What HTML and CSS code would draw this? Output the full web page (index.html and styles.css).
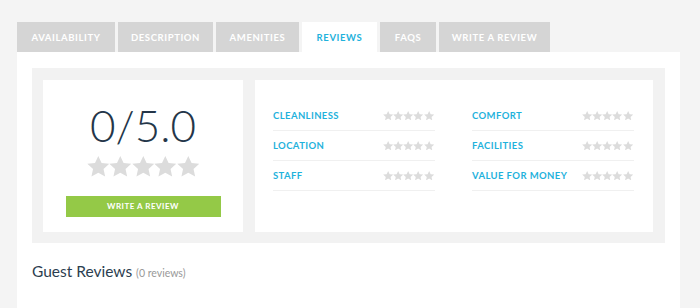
FILE: index.html
```html
<!DOCTYPE html>
<html lang="en">
<head>
    <meta charset="UTF-8">
    <meta name="viewport" content="width=device-width, initial-scale=1.0">
    <title>Reviews</title>
    <link rel="stylesheet" href="styles.css">
</head>
<body>
    <svg width="0" height="0" class="defs">
        <symbol id="star" viewBox="2 2 20 19.2">
            <path d="M12 2l2.94 6.26 6.86.74-5.12 4.65 1.44 6.75L12 16.9l-6.12 3.5 1.44-6.75L2.2 9l6.86-.74z"/>
        </symbol>
    </svg>
    <div class="wrap">
        <ul class="tabs">
            <li class="t-avail">Availability</li>
            <li class="t-desc">Description</li>
            <li class="t-amen">Amenities</li>
            <li class="t-rev active">Reviews</li>
            <li class="t-faq">FAQs</li>
            <li class="t-write">Write a Review</li>
        </ul>
        <div class="panel">
            <div class="summary">
                <div class="score-card">
                    <div class="score">0/5.0</div>
                    <div class="stars big">
                        <svg><use href="#star"/></svg><svg><use href="#star"/></svg><svg><use href="#star"/></svg><svg><use href="#star"/></svg><svg><use href="#star"/></svg>
                    </div>
                    <button class="btn">Write a Review</button>
                </div>
                <div class="ratings-card">
                    <div class="col">
                        <div class="row"><span>Cleanliness</span><div class="stars small"><svg><use href="#star"/></svg><svg><use href="#star"/></svg><svg><use href="#star"/></svg><svg><use href="#star"/></svg><svg><use href="#star"/></svg></div></div>
                        <div class="row"><span>Location</span><div class="stars small"><svg><use href="#star"/></svg><svg><use href="#star"/></svg><svg><use href="#star"/></svg><svg><use href="#star"/></svg><svg><use href="#star"/></svg></div></div>
                        <div class="row"><span>Staff</span><div class="stars small"><svg><use href="#star"/></svg><svg><use href="#star"/></svg><svg><use href="#star"/></svg><svg><use href="#star"/></svg><svg><use href="#star"/></svg></div></div>
                    </div>
                    <div class="col">
                        <div class="row"><span>Comfort</span><div class="stars small"><svg><use href="#star"/></svg><svg><use href="#star"/></svg><svg><use href="#star"/></svg><svg><use href="#star"/></svg><svg><use href="#star"/></svg></div></div>
                        <div class="row"><span>Facilities</span><div class="stars small"><svg><use href="#star"/></svg><svg><use href="#star"/></svg><svg><use href="#star"/></svg><svg><use href="#star"/></svg><svg><use href="#star"/></svg></div></div>
                        <div class="row"><span>Value for Money</span><div class="stars small"><svg><use href="#star"/></svg><svg><use href="#star"/></svg><svg><use href="#star"/></svg><svg><use href="#star"/></svg><svg><use href="#star"/></svg></div></div>
                    </div>
                </div>
            </div>
            <h2 class="guest">Guest Reviews <small>(0 reviews)</small></h2>
        </div>
    </div>
</body>
</html>
```

FILE: styles.css
```css
/* Reviews tab */
body {
    margin: 0;
    background-color: #f4f4f4;
    font-family: Lato, "Open Sans", sans-serif;
    color: #2c3e50;
}

.defs {
    position: absolute;
}

.wrap {
    margin-left: 17px;
    width: 663px;
    padding-top: 22px;
}

.tabs {
    display: flex;
    gap: 3px;
    list-style: none;
    margin: 0;
    padding: 0;
}

.tabs li {
    height: 30px;
    line-height: 31px;
    text-align: center;
    background-color: #d5d5d5;
    color: #fff;
    font-size: 9.5px;
    font-weight: 700;
    letter-spacing: 0.6px;
    text-transform: uppercase;
}

.t-avail { width: 98px; }
.t-desc { width: 95px; }
.t-amen { width: 83px; }
.t-rev { width: 75px; }
.t-faq { width: 56px; }
.t-write { width: 111px; }

.tabs li.active {
    background-color: #fff;
    color: #1fb2dc;
}

.panel {
    background-color: #fff;
    padding: 16px 15px 0;
    height: 240px;
}

.summary {
    display: flex;
    gap: 12px;
    background-color: #f2f2f2;
    padding: 12px 12px 11px 11px;
}

.score-card {
    width: 200px;
    height: 152px;
    background-color: #fff;
    display: flex;
    flex-direction: column;
    align-items: center;
}

.score {
    font-size: 44px;
    font-weight: 300;
    line-height: 1;
    margin-top: 23px;
    color: #243649;
}

.stars {
    display: flex;
}

.stars svg {
    fill: #dcdcdc;
}

.stars.big {
    margin-top: 9px;
}

.stars.big svg {
    width: 22.6px;
    height: 21.5px;
}

.stars.small svg {
    width: 10.3px;
    height: 9.8px;
}

.btn {
    margin-top: 18px;
    width: 155px;
    height: 21px;
    border: none;
    background-color: #94c947;
    color: #fff;
    font-family: Lato, sans-serif;
    font-size: 8px;
    font-weight: 700;
    letter-spacing: 0.5px;
    text-transform: uppercase;
    padding: 0;
}

.ratings-card {
    flex: 1;
    background-color: #fff;
    display: flex;
    gap: 37px;
    padding: 21px 19px 0 18px;
}

.col {
    flex: 1;
}

.row {
    display: flex;
    justify-content: space-between;
    align-items: center;
    height: 29px;
    border-bottom: 1px solid #f0f0f0;
    padding-right: 1px;
}

.row span {
    color: #1fb2dc;
    font-size: 9.5px;
    font-weight: 700;
    letter-spacing: 0.4px;
    text-transform: uppercase;
}

.guest {
    margin: 19px 0 0;
    font-size: 15.5px;
    font-weight: 400;
    color: #2c3e50;
}

.guest small {
    font-size: 10.5px;
    color: #999;
}
```
